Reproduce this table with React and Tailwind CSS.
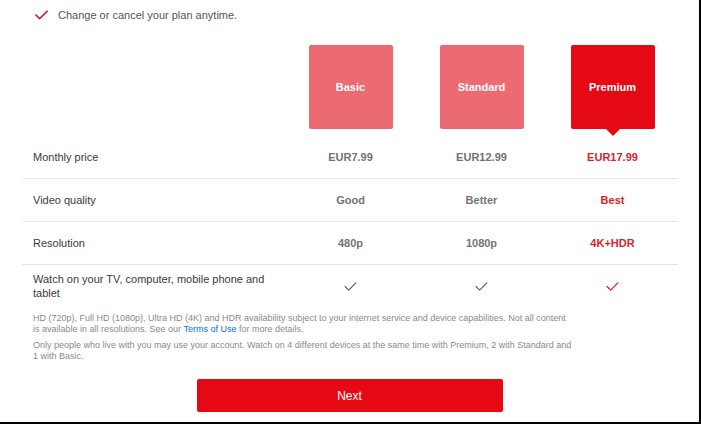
import clsx from 'clsx'

const PLANS = [
  { name: 'Basic', price: 'EUR7.99', quality: 'Good', res: '480p' },
  { name: 'Standard', price: 'EUR12.99', quality: 'Better', res: '1080p' },
  { name: 'Premium', price: 'EUR17.99', quality: 'Best', res: '4K+HDR', active: true },
]

const ROWS = [
  { label: 'Monthly price', key: 'price' },
  { label: 'Video quality', key: 'quality' },
  { label: 'Resolution', key: 'res' },
]

function Tick({ className, strokeWidth = 1.4 }) {
  return (
    <svg viewBox="0 0 14 10" className={className} fill="none" stroke="currentColor" strokeWidth={strokeWidth} strokeLinecap="round" strokeLinejoin="round">
      <polyline points="1,5 5,9 13,1" />
    </svg>
  )
}

export default function App() {
  return (
    <div
      className="w-[701px] h-[424px] bg-white border-r-2 border-b-2 border-black overflow-hidden text-[#3a3a3a]"
      style={{ fontFamily: '"Liberation Sans", Arial, sans-serif' }}
    >
      <div className="flex items-center gap-[10px] pl-[35px] pt-[8px] h-[22px]">
        <Tick className="w-[13px] h-[10px] text-[#c52a3a]" strokeWidth={1.8} />
        <span className="text-[11px] leading-[14px] text-[#555]">Change or cancel your plan anytime.</span>
      </div>

      <div className="mx-[22px] mt-[23px] grid grid-cols-[263px_131px_131px_131px]">
        <div />
        {PLANS.map((p) => (
          <div key={p.name} className="flex justify-center pb-[7px]">
            <div
              className={clsx(
                'relative w-[84px] h-[84px] rounded-[2px] flex items-center justify-center text-white text-[11px] font-bold',
                p.active ? 'bg-[#e50914]' : 'bg-[#ec6b73]'
              )}
            >
              {p.name}
              {p.active && (
                <span className="absolute left-1/2 -translate-x-1/2 top-full w-0 h-0 border-l-[7px] border-r-[7px] border-t-[7px] border-l-transparent border-r-transparent border-t-[#e50914]" />
              )}
            </div>
          </div>
        ))}

        {ROWS.map((r) => (
          <div key={r.key} className="contents">
            <div className="h-[43px] border-b border-[#e6e6e6] flex items-center pl-[11px] text-[11px]">{r.label}</div>
            {PLANS.map((p) => (
              <div
                key={p.name}
                className={clsx(
                  'h-[43px] border-b border-[#e6e6e6] flex items-center justify-center text-[11px] font-bold',
                  p.active ? 'text-[#d81f2c]' : 'text-[#737373]'
                )}
              >
                {p[r.key]}
              </div>
            ))}
          </div>
        ))}

        <div className="h-[42px] flex items-center pl-[11px] text-[11px] leading-[14px]">
          Watch on your TV, computer, mobile phone and<br />tablet
        </div>
        {PLANS.map((p) => (
          <div key={p.name} className="h-[42px] flex items-center justify-center">
            <Tick className={clsx('w-[13px] h-[9px]', p.active ? 'text-[#d81f2c]' : 'text-[#666]')} />
          </div>
        ))}
      </div>

      <div className="px-[33px] pt-[6px] text-[9px] leading-[11px] text-[#8a8a8a]">
        <p>
          HD (720p), Full HD (1080p), Ultra HD (4K) and HDR availability subject to your internet service and device capabilities. Not all content<br />
          is available in all resolutions. See our <span className="text-[#0071eb]">Terms of Use</span> for more details.
        </p>
        <p className="mt-[5px]">
          Only people who live with you may use your account. Watch on 4 different devices at the same time with Premium, 2 with Standard and<br />
          1 with Basic.
        </p>
      </div>

      <button className="mt-[17px] mx-auto block w-[306px] h-[33px] rounded-[2px] bg-[#e50914] text-white text-[12px] font-medium">
        Next
      </button>
    </div>
  )
}
